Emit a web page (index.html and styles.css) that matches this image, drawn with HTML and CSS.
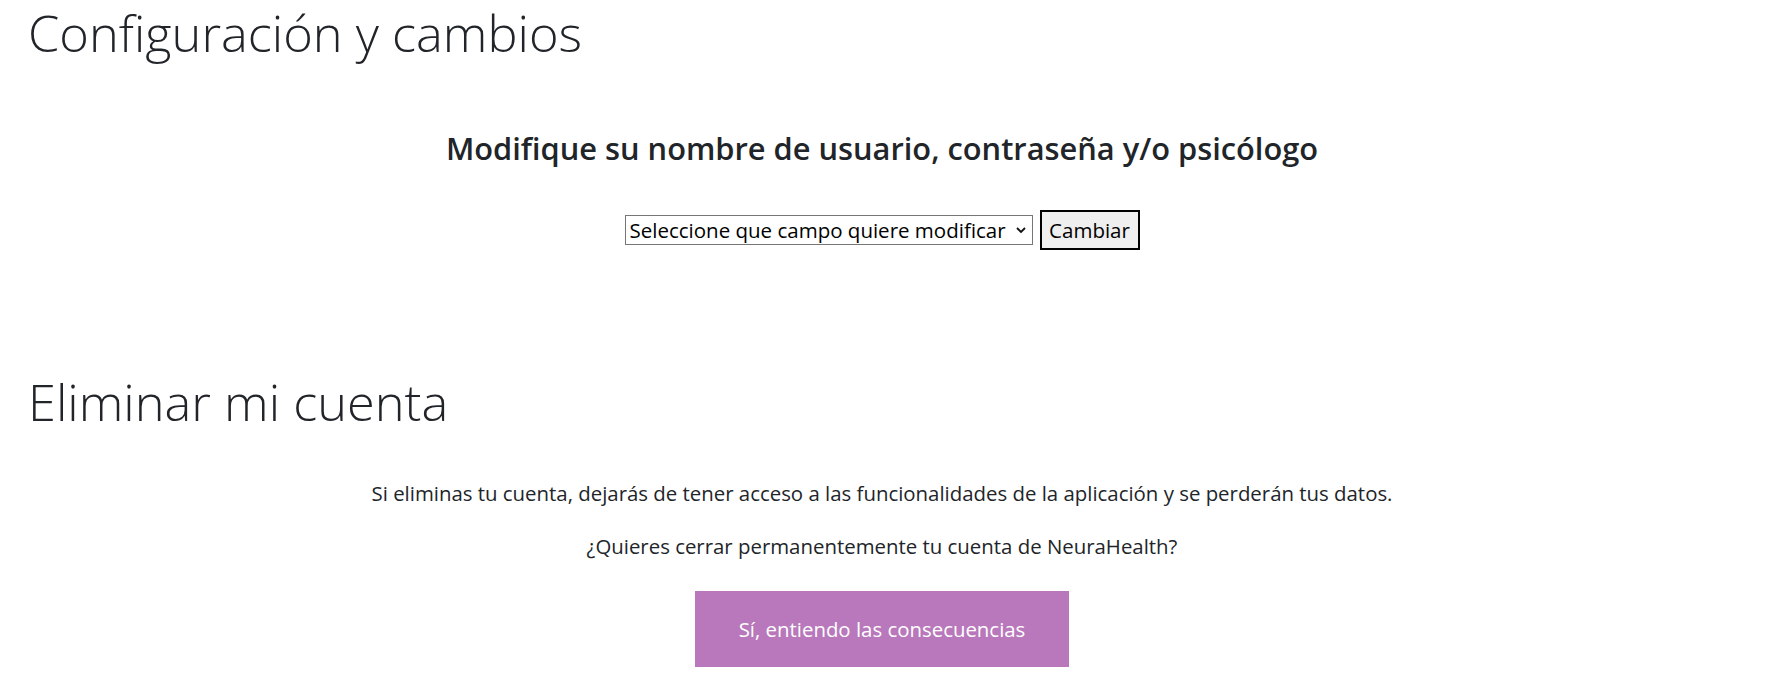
FILE: index.html
```html
<!DOCTYPE html>
<html lang="es">
<head>
<meta charset="utf-8">
<title>Configuración</title>
<link rel="stylesheet" href="styles.css">
</head>
<body>
<main class="page">
  <section class="section">
    <h1 class="title">Configuración y cambios</h1>
    <h2 class="subtitle">Modifique su nombre de usuario, contraseña y/o psicólogo</h2>
    <form class="change-form">
      <div class="select-wrap">
        <select class="field-select">
          <option>Seleccione que campo quiere modificar</option>
        </select>
        <svg class="chev" width="12" height="8" viewBox="0 0 12 8"><path d="M2 2 L6 6 L10 2" fill="none" stroke="#111" stroke-width="1.8"/></svg>
      </div>
      <button type="button" class="change-btn">Cambiar</button>
    </form>
  </section>
  <section class="section delete">
    <h1 class="title">Eliminar mi cuenta</h1>
    <p class="text">Si eliminas tu cuenta, dejarás de tener acceso a las funcionalidades de la aplicación y se perderán tus datos.</p>
    <p class="text">¿Quieres cerrar permanentemente tu cuenta de NeuraHealth?</p>
    <div class="actions">
      <button type="button" class="danger-btn">Sí, entiendo las consecuencias</button>
    </div>
  </section>
</main>
</body>
</html>
```
FILE: styles.css
```css
* { box-sizing: border-box; }
html, body { margin: 0; padding: 0; background: #fff; }
body {
  font-family: "Open Sans", "Noto Sans", sans-serif;
  color: #212529;
}
.page {
  padding: 2px 37px 0 28px;
}
.title {
  margin: 0;
  font-size: 50.5px;
  font-weight: 300;
  line-height: 62px;
  color: #212529;
}
.subtitle {
  margin: 64px 0 0;
  text-align: center;
  font-size: 30.8px;
  font-weight: 600;
  line-height: 40px;
}
.change-form {
  margin-top: 42px;
  display: flex;
  justify-content: center;
  align-items: center;
  gap: 7px;
}
.select-wrap {
  position: relative;
  width: 408px;
  height: 30px;
}
.field-select {
  appearance: none;
  -webkit-appearance: none;
  width: 100%;
  height: 100%;
  border: 1px solid #767676;
  border-radius: 0;
  background: #fff;
  font-family: "Open Sans", sans-serif;
  font-size: 20.5px;
  color: #000;
  padding: 0 22px 0 4px;
  line-height: 28px;
}
.chev {
  position: absolute;
  right: 6px;
  top: 11px;
  pointer-events: none;
}
.change-btn {
  width: 100px;
  height: 40px;
  border: 2px solid #000;
  background: #efefef;
  font-family: "Open Sans", sans-serif;
  font-size: 20.5px;
  color: #000;
  padding: 0;
}
.delete {
  margin-top: 121px;
}
.text {
  margin: 0 0 23px;
  text-align: center;
  font-size: 20.4px;
  line-height: 30px;
}
.delete .title + .text {
  margin-top: 45px;
}
.actions {
  display: flex;
  justify-content: center;
  margin-top: 30px;
}
.danger-btn {
  width: 374px;
  height: 76px;
  border: 0;
  background: #b878bb;
  color: #fff;
  font-family: "Open Sans", sans-serif;
  font-size: 20.4px;
}
```
